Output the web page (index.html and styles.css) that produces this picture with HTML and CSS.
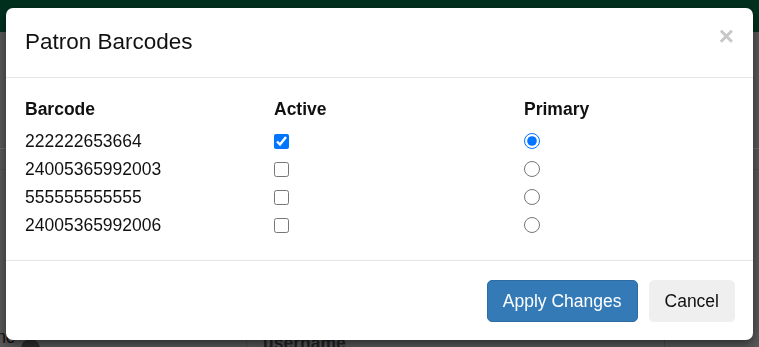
FILE: index.html
```html
<!DOCTYPE html>
<html lang="en">
<head>
    <meta charset="UTF-8">
    <meta name="viewport" content="width=device-width, initial-scale=1.0">
    <title>Patron Barcodes</title>

    <link rel="stylesheet" href="styles.css">
</head>
<body>

    <!-- page behind the dialog (dimmed) -->
    <div class="page">
        <div class="topbar"></div>
        <div class="page-tabs"></div>
        <div class="page-strip"></div>
        <div class="page-fields">
            <div class="field-label">Phone <span class="info-dot"></span></div>
            <div class="field-value">username</div>
            <div class="field-rest"></div>
        </div>
    </div>

    <div class="modal">

        <div class="modal-header">
            <h4 class="modal-title">Patron Barcodes</h4>
            <button class="close" type="button">&times;</button>
        </div>

        <div class="modal-body">
            <div class="barcode-table">
                <div class="cell head">Barcode</div>
                <div class="cell head">Active</div>
                <div class="cell head">Primary</div>

                <div class="cell">222222653664</div>
                <div class="cell"><input type="checkbox" checked></div>
                <div class="cell"><input type="radio" name="primary" checked></div>

                <div class="cell">24005365992003</div>
                <div class="cell"><input type="checkbox"></div>
                <div class="cell"><input type="radio" name="primary"></div>

                <div class="cell">555555555555</div>
                <div class="cell"><input type="checkbox"></div>
                <div class="cell"><input type="radio" name="primary"></div>

                <div class="cell">24005365992006</div>
                <div class="cell"><input type="checkbox"></div>
                <div class="cell"><input type="radio" name="primary"></div>
            </div>
        </div>

        <div class="modal-footer">
            <button class="btn btn-primary" type="button">Apply Changes</button>
            <button class="btn btn-default" type="button">Cancel</button>
        </div>

    </div>

</body>
</html>
```

FILE: styles.css
```css
* {
    margin: 0px;
    padding: 0px;
    box-sizing: border-box;
}
html, body {
    width: 100%;
    height: 100%;
    overflow: hidden;
}
body {
    font-family: "Liberation Sans", Arial, sans-serif;
    font-size: 17.5px;
    color: #111;
    background-color: #595959;
}

/* dimmed page */
.topbar {
    height: 32px;
    background-color: #02301f;
}
.page-tabs {
    height: 117px;
    border-bottom: 1px solid #6b6b6b;
}
.page-strip {
    height: 21px;
    border-bottom: 1px solid #505050;
}
.page-fields {
    display: flex;
    margin-top: 155px;
    height: 60px;
}
.field-label {
    width: 282px;
    margin-left: -35px;
    line-height: 25px;
    color: #121212;
    border-right: 1px solid #4b4b4b;
    display: flex;
    align-items: flex-start;
    gap: 5px;
}
.info-dot {
    width: 19px;
    height: 19px;
    margin-top: 14px;
    border-radius: 50%;
    background-color: #2e2e2e;
}
.field-value {
    width: 418px;
    padding: 8px 0 0 16px;
    font-weight: bold;
    color: #222;
    border-right: 1px solid #4b4b4b;
}

/* dialog */
.modal {
    position: fixed;
    top: 8px;
    left: 6px;
    width: 747px;
    background-color: #fff;
    border-radius: 7px;
    box-shadow: 0 4px 11px rgba(0, 0, 0, 0.5);
}
.modal-header {
    display: flex;
    justify-content: space-between;
    align-items: flex-start;
    padding: 17px 19px 19px 19px;
    border-bottom: 1px solid #e5e5e5;
    height: 70px;
}
.modal-title {
    font-size: 22.5px;
    font-weight: normal;
    line-height: 33px;
}
.close {
    margin-top: -2px;
    background: none;
    border: 0;
    font-family: "Liberation Sans", Arial, sans-serif;
    font-size: 26px;
    font-weight: bold;
    line-height: 1;
    color: #c7c7c7;
}
.modal-body {
    padding: 17px 19px 21px 19px;
}
.barcode-table {
    display: grid;
    grid-template-columns: 249px 250px 1fr;
    grid-template-rows: 32px repeat(4, 28px);
}
.cell {
    display: flex;
    align-items: center;
    line-height: 28px;
}
.head {
    font-weight: bold;
    align-items: flex-start;
}
input[type="checkbox"],
input[type="radio"] {
    width: 15px;
    height: 15px;
    margin: 0;
}
input[type="radio"] {
    width: 16px;
    height: 16px;
}
.modal-footer {
    display: flex;
    justify-content: flex-end;
    gap: 11px;
    padding: 19px 18px 18px 18px;
    border-top: 1px solid #e5e5e5;
}
.btn {
    height: 42px;
    padding: 7px 15px;
    font-family: "Liberation Sans", Arial, sans-serif;
    font-size: 17.5px;
    line-height: 25px;
    border-radius: 5px;
    border: 1px solid transparent;
}
.btn-primary {
    background-color: #337ab7;
    border-color: #2e6da4;
    color: #fff;
}
.btn-default {
    background-color: #efefef;
    border-color: #efefef;
    color: #111;
}
```
